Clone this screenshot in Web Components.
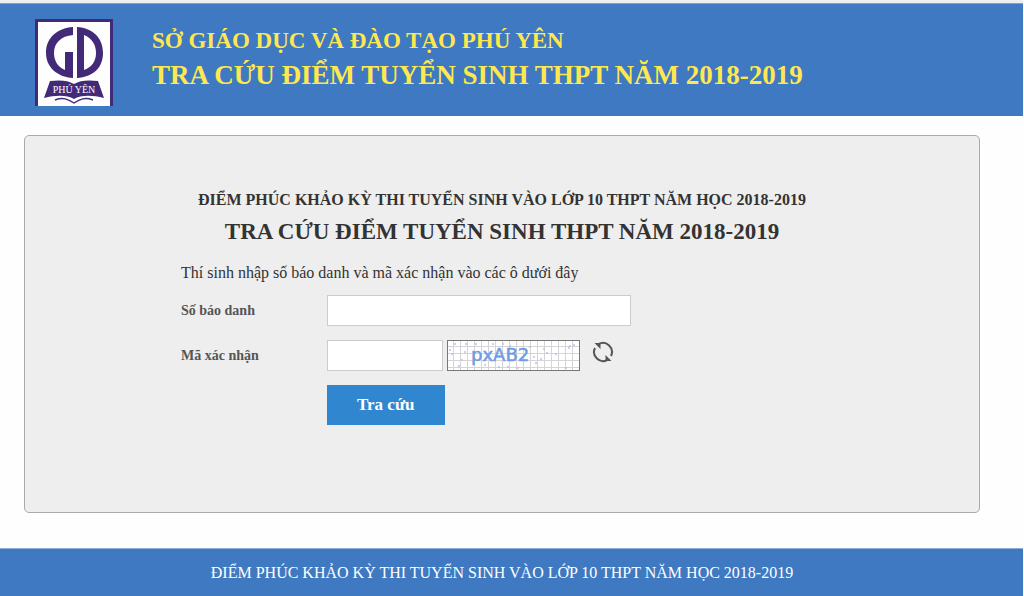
<!DOCTYPE html>
<html lang="vi">
<head>
<meta charset="utf-8">
<meta name="viewport" content="width=device-width, initial-scale=1">
<title>Tra cứu điểm tuyển sinh THPT năm 2018-2019</title>
<style>
    body {
        margin: 0;
        padding-right: 1px;
        min-height: 100vh;
        box-sizing: border-box;
        display: flex;
        flex-direction: column;
        background: #fefefe;
        color: #333;
        font-family: "Liberation Serif", "Times New Roman", serif;
        font-size: 16px;
    }

    main {
        flex: 1;
        display: flex;
        padding: 19px 43px 35px 24px;
    }
</style>
</head>
<body>
<site-header>
    <school-logo slot="logo"></school-logo>
    <span slot="owner">SỞ GIÁO DỤC VÀ ĐÀO TẠO PHÚ YÊN</span>
    <span slot="title">TRA CỨU ĐIỂM TUYỂN SINH THPT NĂM 2018-2019</span>
</site-header>
<main>
    <lookup-panel>
        <span slot="exam">ĐIỂM PHÚC KHẢO KỲ THI TUYỂN SINH VÀO LỚP 10 THPT NĂM HỌC 2018-2019</span>
        <span slot="title">TRA CỨU ĐIỂM TUYỂN SINH THPT NĂM 2018-2019</span>
        <lookup-form></lookup-form>
    </lookup-panel>
</main>
<site-footer>ĐIỂM PHÚC KHẢO KỲ THI TUYỂN SINH VÀO LỚP 10 THPT NĂM HỌC 2018-2019</site-footer>

<script>
class SchoolLogo extends HTMLElement {
    connectedCallback() {
        this.attachShadow({ mode: 'open' });
        this.shadowRoot.innerHTML = `
            <style>
                :host { display: block; }
                svg { display: block; }
            </style>
            <svg width="78" height="87" viewBox="0 0 78 87" role="img" aria-label="GD Phú Yên">
                <rect width="78" height="87" fill="#432a78"/>
                <rect x="3" y="3" width="72" height="84" fill="#fefefe"/>
                <g fill="#432a78">
                    <path d="M38 8v8C26 17 19 24 19 34c0 8 4 14 11 17V33h8v26C22 58 11 48 11 34 11 19 22 9 38 8z"/>
                    <path fill-rule="evenodd" d="M42 8c16 1 26 11 26 26S58 58 42 59zM49 16v35c8-3 12-9 12-17s-4-15-12-18z"/>
                    <path d="M15 62c9-1 18-1 24 3 6-4 15-4 24-3l6 17c-12-3-23-3-30 1-7-4-18-4-30-1z"/>
                </g>
                <path d="M20 81c8-3 13-1 19 3 6-4 11-6 19-3" fill="none" stroke="#432a78" stroke-width="1.500"/>
                <text x="39" y="74" text-anchor="middle" fill="#fff" font-family="Liberation Serif, serif" font-size="10">PHÚ YÊN</text>
            </svg>
        `;
    }
}
customElements.define('school-logo', SchoolLogo);

class SiteHeader extends HTMLElement {
    connectedCallback() {
        this.attachShadow({ mode: 'open' });
        this.shadowRoot.innerHTML = `
            <style>
                :host {
                    display: block;
                    border-top: 3px solid #efeeee;
                }

                header {
                    display: flex;
                    align-items: flex-start;
                    gap: 39px;
                    padding: 15px 35px 10px;
                    border-top: 1px solid #8f9bb5;
                    background: #3e79c1;
                    color: #ffe84f;
                }

                .titles {
                    padding-top: 5px;
                    font-weight: bold;
                    line-height: 34px;
                }

                .owner {
                    font-size: 23px;
                }

                h1 {
                    margin: 0;
                    font-size: 27px;
                }
            </style>
            <header>
                <slot name="logo"></slot>
                <div class="titles">
                    <div class="owner"><slot name="owner"></slot></div>
                    <h1><slot name="title"></slot></h1>
                </div>
            </header>
        `;
    }
}
customElements.define('site-header', SiteHeader);

class CaptchaImage extends HTMLElement {
    connectedCallback() {
        this.attachShadow({ mode: 'open' });
        this.shadowRoot.innerHTML = `
            <style>
                :host {
                    display: block;
                    border: 1px solid #777;
                    background: #fff;
                }

                svg { display: block; }
            </style>
            <svg width="131" height="29" viewBox="0 0 131 29">
                <defs>
                    <pattern id="grid" width="7" height="7" patternUnits="userSpaceOnUse">
                        <path d="M5.5 0v7M0 5.5h7" stroke="#d8d3d6" fill="none"/>
                    </pattern>
                </defs>
                <rect width="131" height="29" fill="url(#grid)"/>
                <g fill="#b3c3ec">${this.dots()}</g>
                <text x="23" y="20" fill="#6f9de3" stroke="#6f9de3" stroke-width=".5" font-family="DejaVu Sans, sans-serif" font-size="18">${this.getAttribute('code')}</text>
            </svg>
        `;
    }

    dots() {
        const points = [[7, 3], [2, 9], [4, 13], [11, 25], [17, 11], [28, 3], [45, 3], [55, 3], [62, 5], [70, 27],
            [82, 6], [88, 22], [99, 12], [108, 13], [122, 5], [126, 4], [121, 7], [60, 26], [51, 26], [37, 24],
            [93, 18], [86, 16], [118, 27], [18, 3], [14, 19], [96, 8]];
        return points.map(([x, y]) => `<circle cx="${x}" cy="${y}" r="1"/>`).join('');
    }
}
customElements.define('captcha-image', CaptchaImage);

class LookupForm extends HTMLElement {
    connectedCallback() {
        this.attachShadow({ mode: 'open' });
        this.shadowRoot.innerHTML = `
            <style>
                :host {
                    display: block;
                }

                p {
                    margin: 0 0 12px;
                    line-height: 20px;
                }

                form {
                    display: grid;
                    grid-template-columns: 146px 1fr;
                    align-items: center;
                    row-gap: 14px;
                }

                label {
                    color: #555;
                    font-size: 14px;
                    font-weight: bold;
                }

                input {
                    box-sizing: border-box;
                    width: 304px;
                    max-width: 100%;
                    height: 31px;
                    margin: 0;
                    padding: 4px 8px;
                    border: 1px solid #ccc;
                    background: #fff;
                    font: inherit;
                }

                .field {
                    display: flex;
                    align-items: center;
                    gap: 4px;
                }

                .field .short {
                    width: 116px;
                }

                button {
                    border: 0;
                    font-family: inherit;
                    cursor: pointer;
                }

                .refresh {
                    display: flex;
                    margin-left: 8px;
                    padding: 0 0 8px;
                    background: none;
                }

                .submit {
                    grid-column: 2;
                    justify-self: start;
                    height: 40px;
                    padding: 0 30px;
                    background: #3187cf;
                    color: #fff;
                    font-size: 17px;
                    font-weight: bold;
                }
            </style>
            <p>Thí sinh nhập số báo danh và mã xác nhận vào các ô dưới đây</p>
            <form>
                <label for="candidate">Số báo danh</label>
                <div class="field"><input id="candidate" type="text"></div>
                <label for="code">Mã xác nhận</label>
                <div class="field">
                    <input id="code" class="short" type="text" autocomplete="off">
                    <captcha-image code="pxAB2"></captcha-image>
                    <button class="refresh" type="button" aria-label="Đổi mã xác nhận">
                        <svg width="22" height="22" viewBox="0 0 22 22">
                            <g fill="none" stroke="#555" stroke-width="2">
                                <path d="M6.500 3.200A9 9 0 0 1 19 15"/>
                                <path d="M15.500 18.800A9 9 0 0 1 3 7"/>
                            </g>
                            <path d="M2.500 2H8.500V8zM19.500 20H13.500V14z" fill="#555"/>
                        </svg>
                    </button>
                </div>
                <button class="submit" type="submit">Tra cứu</button>
            </form>
        `;
        this.shadowRoot.querySelector('form').addEventListener('submit', (e) => e.preventDefault());
    }
}
customElements.define('lookup-form', LookupForm);

class LookupPanel extends HTMLElement {
    connectedCallback() {
        this.attachShadow({ mode: 'open' });
        this.shadowRoot.innerHTML = `
            <style>
                :host {
                    display: block;
                    flex: 1;
                    box-sizing: border-box;
                    padding: 52px 24px 24px;
                    border: 1px solid #aaa;
                    border-radius: 5px;
                    background: #eee;
                }

                .content {
                    max-width: 642px;
                    margin: 0 auto;
                }

                h2, h3 {
                    margin: 0;
                    text-align: center;
                }

                h3 {
                    font-size: 16px;
                    line-height: 24px;
                }

                h2 {
                    margin-bottom: 11px;
                    font-size: 23px;
                    line-height: 40px;
                }
            </style>
            <div class="content">
                <h3><slot name="exam"></slot></h3>
                <h2><slot name="title"></slot></h2>
                <slot></slot>
            </div>
        `;
    }
}
customElements.define('lookup-panel', LookupPanel);

class SiteFooter extends HTMLElement {
    connectedCallback() {
        this.attachShadow({ mode: 'open' });
        this.shadowRoot.innerHTML = `
            <style>
                :host {
                    display: block;
                    border-top: 1px solid #8fafd6;
                }

                footer {
                    padding: 12px 43px 11px 24px;
                    background: #3e79c1;
                    color: #fff;
                    font-size: 16px;
                    line-height: 24px;
                    text-align: center;
                }
            </style>
            <footer><slot></slot></footer>
        `;
    }
}
customElements.define('site-footer', SiteFooter);
</script>
</body>
</html>
